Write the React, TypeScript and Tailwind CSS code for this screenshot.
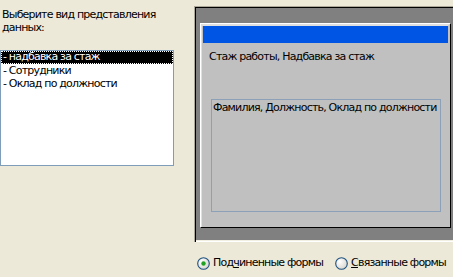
import React from "react";

const font = { fontFamily: '"DejaVu Sans", sans-serif' };

const items = ["- надбавка за стаж", "- Сотрудники", "- Оклад по должности"];

function Radio({ checked }: { checked?: boolean }) {
	return (
		<svg width="13" height="13" viewBox="0 0 13 13" className="shrink-0">
			<defs>
				<radialGradient id={checked ? "rg1" : "rg2"} cx="0.35" cy="0.35" r="0.8">
					<stop offset="0" stopColor="#ffffff" />
					<stop offset="1" stopColor="#d4d0c8" />
				</radialGradient>
			</defs>
			<circle cx="6.5" cy="6.5" r="5.8" fill={`url(#${checked ? "rg1" : "rg2"})`} stroke="#1c5180" strokeWidth="1.1" />
			{checked && <circle cx="6.5" cy="6.5" r="2.2" fill="#21a121" />}
		</svg>
	);
}

export default function App() {
	return (
		<div
			className="w-[453px] h-[277px] bg-[#ECE9D8] flex overflow-hidden text-[11px] tracking-[-0.8px] text-black whitespace-nowrap"
			style={font}
		>
			{/* left column */}
			<div className="w-[194px] shrink-0 flex flex-col">
				<p className="pl-[2px] pt-[8px] leading-[13px]">
					Выберите вид представления
					<br />
					данных:
				</p>
				<div className="mt-[16px] w-[174px] h-[116px] shrink-0 bg-white border border-[#7F9DB9]">
					{items.map((it, i) => (
						<div
							key={it}
							className={
								i === 0
									? "h-[13px] leading-[12px] pl-[2px] bg-black text-white outline-1 outline-dotted outline-offset-[-1px] outline-white"
									: "h-[13px] leading-[13px] pl-[2px]"
							}
						>
							{it}
						</div>
					))}
				</div>
			</div>

			{/* right column */}
			<div className="flex-1 flex flex-col pt-[6px]">
				<div className="w-[262px] h-[236px] shrink-0 border-l border-t border-[#ACA899] border-b-0">
					<div className="h-full border-l border-t border-black bg-[#808080] flex flex-col">
						<div className="pl-[4px] pt-[15px]">
							<div className="w-[251px] h-[205px] border-t border-l border-white border-r border-b border-r-black border-b-black">
								<div className="h-full border-t-2 border-l border-[#DFDFDF] border-r-2 border-r-[#C0C0C0] bg-[#C0C0C0] pl-[1px]">
									<div className="h-[17px] bg-[#0055E5]" />
									<div className="pl-[6px] pt-[7px] leading-[13px]">
										Стаж работы, Надбавка за стаж
									</div>
									<div className="ml-[8px] mt-[36px] w-[230px] h-[113px] border border-[#8CA0B8] pl-[1px] pt-[1px] leading-[13px]">
										Фамилия, Должность, Оклад по должности
									</div>
								</div>
							</div>
						</div>
						<div className="flex-1" />
						<div className="h-[1px] bg-[#F1EFE2]" />
						<div className="h-[1px] bg-white" />
					</div>
				</div>
				<div className="flex items-center pl-[3px] pt-[13px]">
					<Radio checked />
					<span className="ml-[3px]">
						Под<u>ч</u>иненные формы
					</span>
					<span className="ml-[12px]">
						<Radio />
					</span>
					<span className="ml-[3px]">
						<u>С</u>вязанные формы
					</span>
				</div>
			</div>
		</div>
	);
}
